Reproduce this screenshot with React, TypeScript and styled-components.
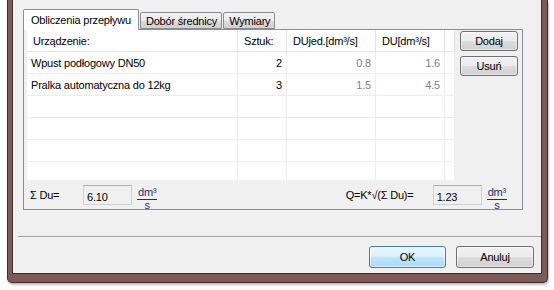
import styled, { createGlobalStyle } from 'styled-components';

const GlobalStyle = createGlobalStyle`
  html, body {
    margin: 0;
    padding: 0;
    background: #ffffff;
  }
  body {
    font-family: "Liberation Sans", Arial, sans-serif;
    font-size: 11px;
    letter-spacing: -0.2px;
    color: #000;
  }
`;

const devices = [
  { id: 1, name: 'Wpust podłogowy DN50', qty: '2', duJed: '0.8', du: '1.6' },
  { id: 2, name: 'Pralka automatyczna do 12kg', qty: '3', duJed: '1.5', du: '4.5' }
];

const emptyRows = [1, 2, 3, 4];

const tabs = [
  { id: 1, name: 'Obliczenia przepływu', active: true },
  { id: 2, name: 'Dobór średnicy', active: false },
  { id: 3, name: 'Wymiary', active: false }
];

const Fraction = () => (
  <Frac>
    <Num>dm³</Num>
    <Den>s</Den>
  </Frac>
);

export default function App() {
  return (
    <Page>
      <GlobalStyle />
      <Window>
        <Client>
          <TabStrip>
            {tabs.map((t) => (
              <Tab key={t.id} $active={t.active}>
                {t.name}
              </Tab>
            ))}
          </TabStrip>
          <TabPanel>
            <PanelTop>
              <Grid>
                <HeadCell>Urządzenie:</HeadCell>
                <HeadCell>Sztuk:</HeadCell>
                <HeadCell>DUjed.[dm³/s]</HeadCell>
                <HeadCell>DU[dm³/s]</HeadCell>
                <HeadCell />
                {devices.map((d) => (
                  <Row key={d.id}>
                    <Cell>{d.name}</Cell>
                    <Cell $num>{d.qty}</Cell>
                    <Cell $num $muted>{d.duJed}</Cell>
                    <Cell $num $muted>{d.du}</Cell>
                    <Cell />
                  </Row>
                ))}
                {emptyRows.map((r) => (
                  <Row key={r}>
                    <Cell />
                    <Cell />
                    <Cell />
                    <Cell />
                    <Cell />
                  </Row>
                ))}
              </Grid>
              <SideButtons>
                <Button $w={58} $h={20}>Dodaj</Button>
                <Button $w={58} $h={20}>Usuń</Button>
              </SideButtons>
            </PanelTop>
            <SumRow>
              <SumGroup>
                <SumLabel $w={53}>Σ Du=</SumLabel>
                <ReadBox>6.10</ReadBox>
                <Fraction />
              </SumGroup>
              <SumGroup>
                <SumLabel $w={87}>Q=K*√(Σ Du)=</SumLabel>
                <ReadBox>1.23</ReadBox>
                <Fraction />
              </SumGroup>
            </SumRow>
          </TabPanel>
          <Separator />
          <DialogButtons>
            <Button $w={77} $h={22} $default>OK</Button>
            <Button $w={78} $h={22}>Anuluj</Button>
          </DialogButtons>
        </Client>
      </Window>
    </Page>
  );
}

const Page = styled.div`
  padding-left: 7px;
  width: 554px;
  height: 290px;
  box-sizing: border-box;
  overflow: hidden;
`;

const Window = styled.div`
  width: 541px;
  height: 283px;
  box-sizing: border-box;
  background: #7d5b57;
  border: 1px solid #3d2d2c;
  border-top: none;
  border-radius: 0 0 5px 5px;
  padding: 0 5px 8px 4px;
  box-shadow: 1px 2px 2px rgba(0, 0, 0, 0.25);
`;

const Client = styled.div`
  height: 100%;
  box-sizing: border-box;
  background: #f0f0f0;
  border: 1px solid #3d2d2c;
  border-top: none;
  display: flex;
  flex-direction: column;
`;

const TabStrip = styled.div`
  display: flex;
  align-items: flex-end;
  padding: 9px 0 0 10px;
  gap: 1px;
`;

const Tab = styled.div<{ $active: boolean }>`
  position: relative;
  z-index: ${(p) => (p.$active ? 1 : 0)};
  height: ${(p) => (p.$active ? '21px' : '17px')};
  margin-bottom: ${(p) => (p.$active ? '-1px' : '0')};
  padding: ${(p) => (p.$active ? '0 7px 0 7px' : '0 4px 0 5px')};
  display: flex;
  align-items: center;
  border: 1px solid #898c95;
  border-bottom: ${(p) => (p.$active ? 'none' : '1px solid #898c95')};
  border-radius: 2px 2px 0 0;
  background: ${(p) =>
    p.$active ? '#ffffff' : 'linear-gradient(#f2f2f2 0%, #ebebeb 50%, #dddddd 51%, #cfcfcf 100%)'};
  box-sizing: border-box;
  white-space: nowrap;
`;

const TabPanel = styled.div`
  width: 500px;
  height: 181px;
  margin-left: 10px;
  box-sizing: border-box;
  border: 1px solid #898c95;
  display: flex;
  flex-direction: column;
  overflow: hidden;
`;

const PanelTop = styled.div`
  display: flex;
  gap: 5px;
  padding-left: 3px;
`;

const Grid = styled.div`
  width: 428px;
  height: 150px;
  overflow: hidden;
  background: #fff;
  display: grid;
  grid-template-columns: 211px 49px 89px 69px 1fr;
  grid-auto-rows: 22px;
  align-content: start;
`;

const Row = styled.div`
  display: contents;
`;

const HeadCell = styled.div`
  display: flex;
  align-items: center;
  padding-left: 6px;
  border-right: 1px solid #e3e3e3;
  border-bottom: 1px solid #e3e3e3;
  white-space: nowrap;
`;

const Cell = styled.div<{ $num?: boolean; $muted?: boolean }>`
  display: flex;
  align-items: center;
  justify-content: ${(p) => (p.$num ? 'flex-end' : 'flex-start')};
  padding: ${(p) => (p.$num ? '0 4px 0 0' : '0 0 0 4px')};
  color: ${(p) => (p.$muted ? '#808080' : '#000')};
  border-right: 1px solid #ededed;
  border-bottom: 1px solid #ededed;
  white-space: nowrap;
`;

const SideButtons = styled.div`
  display: flex;
  flex-direction: column;
  gap: 5px;
  padding-top: 1px;
`;

const Button = styled.div<{ $w: number; $h: number; $default?: boolean }>`
  width: ${(p) => p.$w}px;
  height: ${(p) => p.$h}px;
  box-sizing: border-box;
  display: flex;
  align-items: center;
  justify-content: center;
  border: 1px solid ${(p) => (p.$default ? '#3c7fb1' : '#707070')};
  border-radius: 3px;
  background: ${(p) =>
    p.$default
      ? 'linear-gradient(#eaf6fd 0%, #d9f0fc 50%, #bee6fd 51%, #a7d9f5 100%)'
      : 'linear-gradient(#f2f2f2 0%, #ebebeb 50%, #dddddd 51%, #cfcfcf 100%)'};
  box-shadow: inset 0 0 0 1px ${(p) => (p.$default ? 'rgba(255,255,255,0.6)' : 'rgba(255,255,255,0.5)')};
`;

const SumRow = styled.div`
  display: flex;
  justify-content: space-between;
  align-items: flex-start;
  padding: 5px 15px 0 6px;
`;

const SumGroup = styled.div`
  display: flex;
  align-items: flex-start;
`;

const SumLabel = styled.div<{ $w: number }>`
  width: ${(p) => p.$w}px;
  padding-top: 4px;
  white-space: nowrap;
`;

const ReadBox = styled.div`
  width: 49px;
  height: 20px;
  box-sizing: border-box;
  border: 1px solid #cfd1d6;
  border-top-color: #abadb3;
  background: #f0f0f0;
  padding: 5px 0 0 3px;
`;

const Frac = styled.div`
  margin: 1px 0 0 5px;
  display: flex;
  flex-direction: column;
  align-items: center;
  color: #15336a;
`;

const Num = styled.div`
  border-bottom: 1px solid #15336a;
  line-height: 12px;
  padding: 0 1px 1px;
`;

const Den = styled.div`
  line-height: 11px;
`;

const Separator = styled.div`
  margin: 26px 0 0 5px;
  border-top: 1px solid #a0a0a0;
`;

const DialogButtons = styled.div`
  display: flex;
  justify-content: flex-end;
  gap: 10px;
  padding: 9px 7px 0 0;
`;
